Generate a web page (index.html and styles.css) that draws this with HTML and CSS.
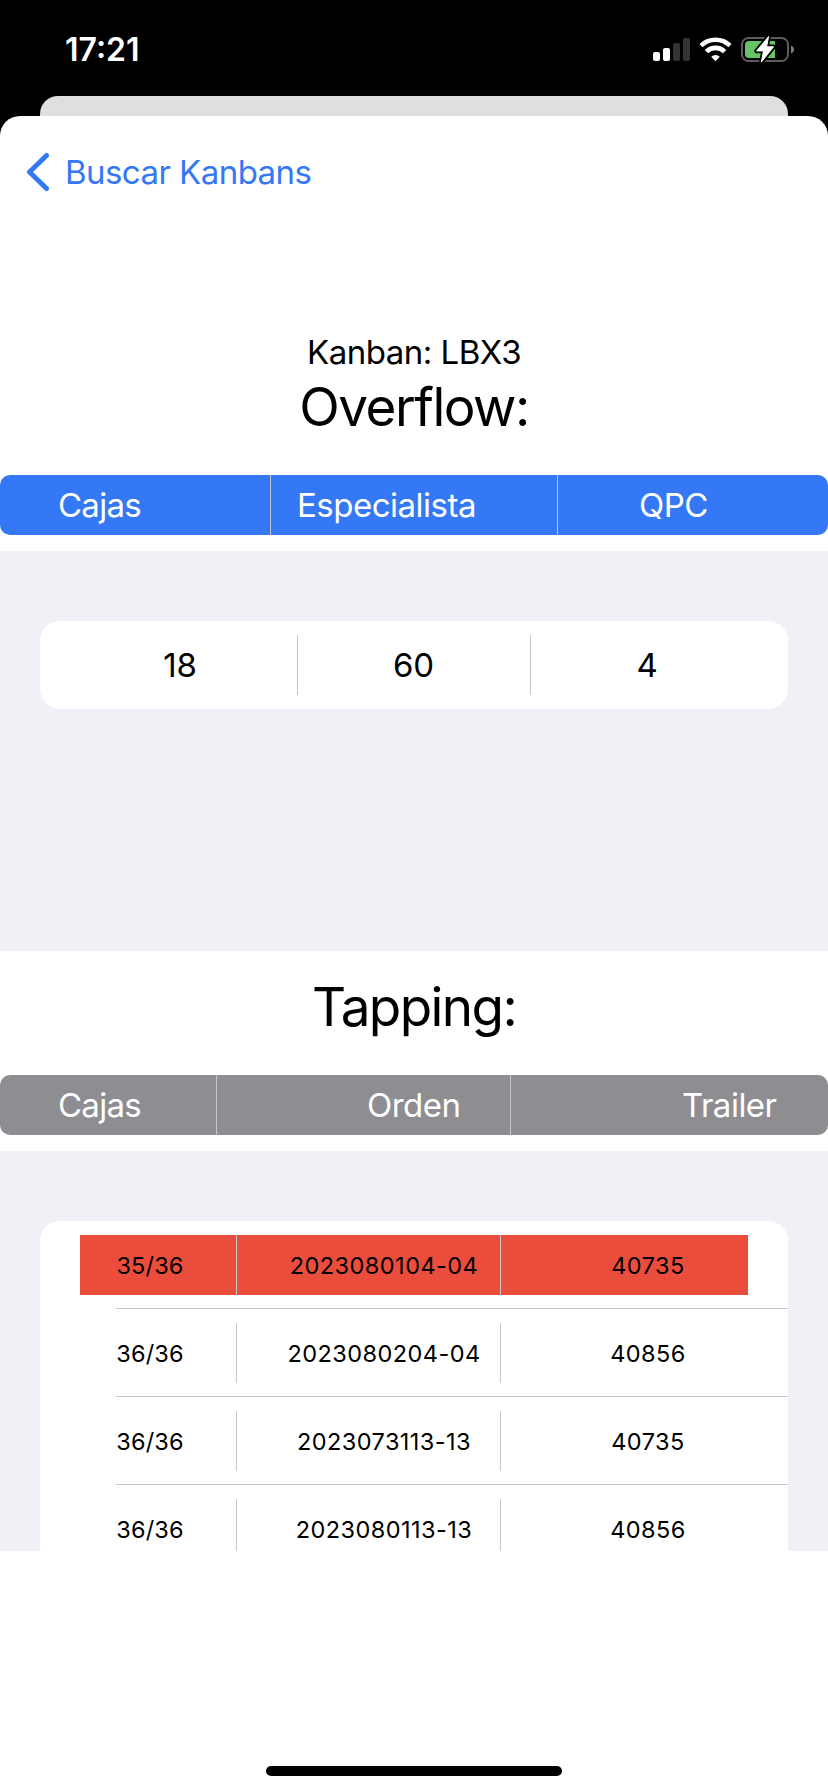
FILE: index.html
```html
<!DOCTYPE html>
<html lang="es">
<head>
<meta charset="utf-8">
<title>Kanban LBX3</title>
<link rel="stylesheet" href="styles.css">
</head>
<body>
<div class="screen">
  <header class="status">
    <span class="time">17:21</span>
    <svg class="status-icons" width="148" height="32" viewBox="650 34 148 32">
      <g fill="#fff">
        <rect x="653" y="52" width="7" height="9" rx="2"/>
        <rect x="663" y="48" width="7" height="13" rx="2"/>
      </g>
      <g fill="#333">
        <rect x="673" y="43" width="7" height="18" rx="2"/>
        <rect x="683" y="38" width="7" height="23" rx="2"/>
      </g>
      <g fill="none" stroke="#fff" stroke-width="4.6">
        <path d="M701 45.6a21 21 0 0 1 29 0"/>
        <path d="M706.4 51.6a13 13 0 0 1 18.2 0"/>
      </g>
      <path d="M715.5 61.2l-4.300-4.500a6.400 6.400 0 0 1 8.600 0z" fill="#fff"/>
      <rect x="742" y="38" width="46" height="23" rx="6.500" fill="none" stroke="#5c5c5c" stroke-width="2"/>
      <path d="M791 45.500c4 1.500 4 6.500 0 8z" fill="#7d7d7d"/>
      <path d="M749 41h26v17h-26a4 4 0 0 1-4-4v-9a4 4 0 0 1 4-4z" fill="#66c466"/>
      <path d="M768.600 36.500L756.600 50.900h6.900l-2.200 11.300 12.200-15.400h-6.900z" fill="#fff" stroke="#000" stroke-width="4.500" stroke-linejoin="round"/>
      <path d="M768.600 36.500L756.600 50.900h6.900l-2.200 11.300 12.200-15.400h-6.900z" fill="#fff" stroke="#fff" stroke-width="1" stroke-linejoin="round"/>
    </svg>
  </header>
  <div class="sheet-behind"></div>
  <main class="sheet">
    <nav class="back">
      <svg width="24" height="40" viewBox="0 0 24 40"><path d="M21.500 3.500L4.500 20l17 16.500" fill="none" stroke="#3478f6" stroke-width="5" stroke-linecap="round" stroke-linejoin="round"/></svg>
      <span class="back-label">Buscar Kanbans</span>
    </nav>
    <p class="kanban">Kanban: LBX3</p>
    <h1 class="title">Overflow:</h1>
    <div class="bar bar-blue">
      <span class="cell cajas">Cajas</span><span class="cell esp">Especialista</span><span class="cell qpc">QPC</span>
    </div>
    <section class="group">
      <div class="card">
        <div class="values"><span class="cell v-cajas">18</span><span class="cell v-esp">60</span><span class="cell v-qpc">4</span></div>
      </div>
    </section>
    <h1 class="title title-tapping">Tapping:</h1>
    <div class="bar bar-gray">
      <span class="cell cajas">Cajas</span><span class="cell orden">Orden</span><span class="cell trailer">Trailer</span>
    </div>
    <section class="group">
      <div class="card card-list">
        <div class="item"><div class="row alert"><span class="cell">35/36</span><span class="cell">2023080104-04</span><span class="cell">40735</span></div></div>
        <div class="item"><div class="row"><span class="cell">36/36</span><span class="cell">2023080204-04</span><span class="cell">40856</span></div></div>
        <div class="item"><div class="row"><span class="cell">36/36</span><span class="cell">2023073113-13</span><span class="cell">40735</span></div></div>
        <div class="item"><div class="row"><span class="cell">36/36</span><span class="cell">2023080113-13</span><span class="cell">40856</span></div></div>
      </div>
    </section>
    <div class="home-indicator"></div>
  </main>
</div>
</body>
</html>
```

FILE: styles.css
```css
* { box-sizing: border-box; margin: 0; padding: 0; }
body { background: #000; font-family: Inter, "Liberation Sans", sans-serif; color: #000; }
svg { display: block; }
.screen { width: 828px; height: 1792px; overflow: hidden; display: flex; flex-direction: column; }
.status { height: 96px; flex: none; display: flex; justify-content: space-between; align-items: flex-start; padding: 34px 30px 0 65px; color: #fff; }
.time { font-size: 32px; font-weight: 600; line-height: 32px; letter-spacing: 0; }
.sheet-behind { height: 20px; flex: none; margin: 0 40px; background: #dfdfdf; border-radius: 18px 18px 0 0; }
.sheet { flex: 1; background: #fff; border-radius: 20px 20px 0 0; display: flex; flex-direction: column; }
.back { display: flex; align-items: center; gap: 16px; height: 40px; margin: 36px 0 0 25px; color: #3478f6; font-size: 33px; line-height: 40px; }
.back-label { letter-spacing: -0.55px; }
.kanban { margin-top: 140px; height: 40px; line-height: 40px; font-size: 33px; text-align: center; letter-spacing: -0.5px; }
.title { height: 62px; margin: 4px 0 37px; line-height: 62px; font-size: 53px; font-weight: 400; text-align: center; letter-spacing: -1.5px; }
.title-tapping { margin: 25px 0 37px; letter-spacing: -1.6px; }
.bar { display: grid; height: 60px; flex: none; border-radius: 10px; color: #fff; font-size: 33px; line-height: 60px; overflow: hidden; letter-spacing: -0.5px; }
.bar-blue { background: #3478f6; grid-template-columns: 271px 287px 270px; }
.bar-gray { background: #8e8d92; grid-template-columns: 217px 294px 317px; }
.cell { border-right: 1px solid #c6c6c8; white-space: nowrap; }
.cell:last-child { border-right: 0; }
.cajas { padding-left: 58px; letter-spacing: -0.75px; }
.esp { padding-left: 26px; }
.qpc { padding-left: 81px; }
.orden { padding-left: 150px; }
.trailer { padding-left: 171px; }
.group { height: 400px; flex: none; margin-top: 16px; padding: 70px 40px 0; background: #f1f0f6; overflow: hidden; }
.card { background: #fff; border-radius: 20px; overflow: hidden; }
.values { display: grid; grid-template-columns: 258px 233px 257px; height: 88px; padding: 14px 0; font-size: 33px; line-height: 60px; text-align: center; letter-spacing: -0.2px; }
.v-cajas { padding-left: 23px; }
.v-esp { padding-right: 1px; }
.v-qpc { padding-right: 25px; }
.item { position: relative; height: 88px; padding: 14px 40px 13px; }
.item::after { content: ""; position: absolute; left: 76px; right: 0; bottom: 0; height: 1px; background: #c6c6c8; }
.row { display: grid; grid-template-columns: 157px 264px 247px; height: 60px; font-size: 23.5px; line-height: 62px; text-align: center; letter-spacing: 0.45px; }
.row .cell { height: 60px; }
.row .cell:nth-child(1) { padding-right: 16px; letter-spacing: 0.15px; }
.row .cell:nth-child(2) { padding-left: 31px; }
.row .cell:nth-child(3) { padding-left: 47px; }
.alert { background: #eb4d3d; }
.home-indicator { width: 296px; height: 10px; margin: auto auto 16px; border-radius: 5px; background: #000; }
```
